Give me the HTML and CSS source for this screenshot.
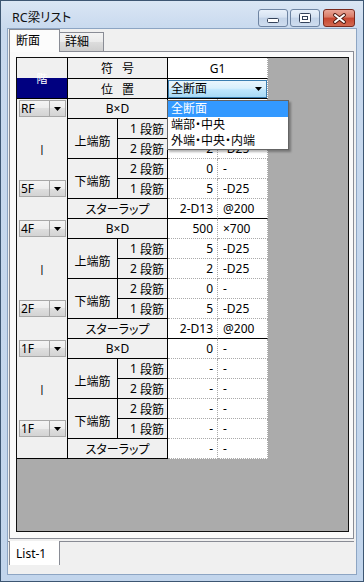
FILE: index.html
```html
<!DOCTYPE html>
<html lang="ja">
<head>
<meta charset="utf-8">
<title>RC梁リスト</title>
<link rel="stylesheet" href="styles.css">
</head>
<body>
<div class="window">
  <div class="titlebar">
    <span class="title">RC梁リスト</span>
    <div class="caps">
      <div class="cbtn min"><svg width="12" height="5" viewBox="0 0 12 5"><rect x="0.5" y="0.5" width="11" height="4" rx="1" fill="#fff" stroke="#34425a"/></svg></div>
      <div class="cbtn max"><svg width="12" height="10" viewBox="0 0 12 10"><rect x="0.5" y="0.5" width="11" height="9" rx="1" fill="#fff" stroke="#34425a"/><rect x="3.5" y="3.5" width="5" height="3" fill="none" stroke="#34425a"/></svg></div>
      <div class="cbtn close"><svg width="15" height="11" viewBox="0 0 15 11"><path d="M3 2 L12 9 M12 2 L3 9" stroke="#4a1a12" stroke-width="3.8" stroke-linecap="round"/><path d="M3 2 L12 9 M12 2 L3 9" stroke="#fff" stroke-width="2" stroke-linecap="round"/></svg></div>
    </div>
  </div>
  <div class="client">
    <div class="tabs">
      <div class="tab active">断面</div>
      <div class="tab">詳細</div>
    </div>
    <div class="tabpanel">
      <div class="gv">
        <div class="grid">
          <div class="c kai">階</div>
          <div class="c s2 sp">符 号</div>
          <div class="c v s2 hb">G1</div>
          <div class="c s2 sp">位 置</div>
          <div class="c v s2 hb hc"><div class="hcmb"><span class="t">全断面</span><span class="b"><svg width="7" height="4" viewBox="0 0 7 4"><path d="M0 0H7L3.5 4Z" fill="#000"/></svg></span></div></div>

          <div class="c fl">
            <div class="cr"><div class="cmb"><span class="t">RF</span><span class="b"><svg width="7" height="4" viewBox="0 0 7 4"><path d="M0 0H7L3.5 4Z" fill="#000"/></svg></span></div></div>
            <div class="bar">|</div>
            <div class="cr"><div class="cmb"><span class="t">5F</span><span class="b"><svg width="7" height="4" viewBox="0 0 7 4"><path d="M0 0H7L3.5 4Z" fill="#000"/></svg></span></div></div>
          </div>
          <div class="c s2">B×D</div><div class="c v n"></div><div class="c v u"></div>
          <div class="c r2 lab">上端筋</div><div class="c dan"><span class="d">1</span>段筋</div><div class="c v n"></div><div class="c v u"></div>
          <div class="c dan"><span class="d">2</span>段筋</div><div class="c v n">2</div><div class="c v u">-D25</div>
          <div class="c r2 lab">下端筋</div><div class="c dan"><span class="d">2</span>段筋</div><div class="c v n">0</div><div class="c v u">-</div>
          <div class="c dan"><span class="d">1</span>段筋</div><div class="c v n">5</div><div class="c v u">-D25</div>
          <div class="c s2">スターラップ</div><div class="c v n end">2-D13</div><div class="c v u end">@200</div>

          <div class="c fl">
            <div class="cr"><div class="cmb"><span class="t">4F</span><span class="b"><svg width="7" height="4" viewBox="0 0 7 4"><path d="M0 0H7L3.5 4Z" fill="#000"/></svg></span></div></div>
            <div class="bar">|</div>
            <div class="cr"><div class="cmb"><span class="t">2F</span><span class="b"><svg width="7" height="4" viewBox="0 0 7 4"><path d="M0 0H7L3.5 4Z" fill="#000"/></svg></span></div></div>
          </div>
          <div class="c s2">B×D</div><div class="c v n">500</div><div class="c v u">×700</div>
          <div class="c r2 lab">上端筋</div><div class="c dan"><span class="d">1</span>段筋</div><div class="c v n">5</div><div class="c v u">-D25</div>
          <div class="c dan"><span class="d">2</span>段筋</div><div class="c v n">2</div><div class="c v u">-D25</div>
          <div class="c r2 lab">下端筋</div><div class="c dan"><span class="d">2</span>段筋</div><div class="c v n">0</div><div class="c v u">-</div>
          <div class="c dan"><span class="d">1</span>段筋</div><div class="c v n">5</div><div class="c v u">-D25</div>
          <div class="c s2">スターラップ</div><div class="c v n end">2-D13</div><div class="c v u end">@200</div>

          <div class="c fl last">
            <div class="cr"><div class="cmb"><span class="t">1F</span><span class="b"><svg width="7" height="4" viewBox="0 0 7 4"><path d="M0 0H7L3.5 4Z" fill="#000"/></svg></span></div></div>
            <div class="bar">|</div>
            <div class="cr"><div class="cmb"><span class="t">1F</span><span class="b"><svg width="7" height="4" viewBox="0 0 7 4"><path d="M0 0H7L3.5 4Z" fill="#000"/></svg></span></div></div>
          </div>
          <div class="c s2">B×D</div><div class="c v n">0</div><div class="c v u">-</div>
          <div class="c r2 lab">上端筋</div><div class="c dan"><span class="d">1</span>段筋</div><div class="c v n">-</div><div class="c v u">-</div>
          <div class="c dan"><span class="d">2</span>段筋</div><div class="c v n">-</div><div class="c v u">-</div>
          <div class="c r2 lab">下端筋</div><div class="c dan"><span class="d">2</span>段筋</div><div class="c v n">-</div><div class="c v u">-</div>
          <div class="c dan"><span class="d">1</span>段筋</div><div class="c v n">-</div><div class="c v u">-</div>
          <div class="c s2">スターラップ</div><div class="c v n">-</div><div class="c v u">-</div>
        </div>
        <div class="dd">
          <div class="it sel">全断面</div>
          <div class="it">端部・中央</div>
          <div class="it">外端・中央・内端</div>
        </div>
      </div>
    </div>
    <div class="bstrip">
      <div class="btab">List-1</div>
    </div>
  </div>
</div>
</body>
</html>
```

FILE: styles.css
```css
* { box-sizing: border-box; }
html, body { margin: 0; padding: 0; }
body {
  width: 364px;
  height: 582px;
  overflow: hidden;
  font-family: "Noto Sans", "Noto Sans CJK JP", sans-serif;
  font-size: 12px;
  color: #000;
  font-feature-settings: "palt";
  background: #c4d6ec;
}
.window {
  width: 364px;
  height: 582px;
  border: 1px solid #3d5672;
  background: linear-gradient(#dae6f4 0, #c8d9ee 28px, #c2d5ec 100%);
  display: flex;
  flex-direction: column;
  padding: 0 7px 7px 7px;
}
.titlebar {
  height: 28px;
  flex: none;
  display: flex;
  align-items: flex-start;
}
.title {
  margin: 10px 0 0 4px;
  line-height: 14px;
  font-size: 12.5px;
  color: #101010;
}
.caps {
  margin-left: auto;
  margin-top: 8px;
  margin-right: 1px;
  display: flex;
}
.cbtn {
  height: 18px;
  border-radius: 3px;
  display: flex;
  align-items: center;
  justify-content: center;
}
.min, .max {
  width: 30px;
  border: 1px solid #6e84a2;
  background: linear-gradient(#e8f0fa 0, #d6e2f1 45%, #c3d3e8 50%, #cfddef 100%);
}
.min { margin-right: 2px; }
.min svg { margin-top: 4px; }
.close {
  width: 32px;
  margin-left: 3px;
  border: 1px solid #7a2a1e;
  background: linear-gradient(#e9a597 0, #d97a66 45%, #c7452f 50%, #d36a52 100%);
}
.client {
  flex: 1;
  background: #f0f0f0;
  box-shadow: 0 0 0 1px #8da5c3;
  display: flex;
  flex-direction: column;
}
.tabs {
  height: 22px;
  flex: none;
  display: flex;
  align-items: flex-start;
  padding-left: 1px;
  position: relative;
  z-index: 1;
}
.tab {
  height: 19px;
  width: 44px;
  margin-top: 3px;
  border: 1px solid #898c95;
  border-left: none;
  border-bottom: none;
  padding-left: 5px;
  line-height: 18px;
  background: linear-gradient(#f3f3f3 0, #ebebeb 50%, #dddddd 50%, #cfcfcf 100%);
}
.tab.active {
  width: 51px;
  height: 23px;
  margin-top: 0;
  border-left: 1px solid #898c95;
  padding-left: 6px;
  line-height: 21px;
  background: #fcfcfc;
}
.tabpanel {
  height: 488px;
  flex: none;
  margin: 0 2px 0 1px;
  border: 1px solid #898c95;
  background: #fafafa;
  padding: 5px 4px 6px 6px;
}
.gv {
  height: 475px;
  border: 1px solid #101010;
  background: #ababab;
  position: relative;
}
.grid {
  display: grid;
  grid-template-columns: 51px 50px 50px 50px 50px;
  grid-template-rows: 21px repeat(19, 20px);
  width: 251px;
}
.c {
  display: flex;
  align-items: center;
  justify-content: center;
  white-space: nowrap;
  overflow: hidden;
  background: #f0f0f0;
  border-right: 1px solid #000;
  border-bottom: 1px solid #000;
}
.v {
  background: #fff;
  border-right: 1px dotted #aaaaaa;
  border-bottom: 1px dotted #aaaaaa;
}
.hb, .end { border-bottom: 1px solid #000; }
.s2 { grid-column: span 2; }
.r2 { grid-row: span 2; }
.sp { word-spacing: 6px; }
.n { justify-content: flex-end; padding-right: 4px; }
.u { justify-content: flex-start; padding-left: 5px; }
.dan { justify-content: flex-end; padding-right: 3px; }
.dan .d { margin-right: 3px; }
.lab { padding-top: 4px; }
.kai {
  grid-row: span 2;
  align-items: flex-start;
  padding-top: 14px;
  line-height: 14px;
  font-size: 11px;
  color: #fff;
  background: linear-gradient(#f0f0f0 0, #f0f0f0 20px, #000080 20px, #000080 100%);
}
.hc { align-items: flex-start; }
.hcmb {
  width: 100%;
  height: 18px;
  margin-top: 1px;
  display: flex;
  border: 1px solid #3c7fb1;
  background: linear-gradient(#eaf6fd 0, #d9f0fc 45%, #bee6fd 55%, #a7d9f5 100%);
}
.hcmb .t { flex: 1; padding-left: 2px; line-height: 16px; }
.hcmb .b { width: 16px; display: flex; align-items: center; justify-content: center; }
.fl {
  grid-row: span 6;
  border-bottom: none;
  flex-direction: column;
  align-items: stretch;
  justify-content: flex-start;
}
.fl.last { border-bottom: 1px solid #000; }
.cr { height: 20px; padding: 1px 0 0 2px; }
.bar {
  height: 60px;
  display: flex;
  align-items: center;
  justify-content: center;
  font-size: 11px;
  font-family: "Liberation Sans", sans-serif;
}
.cmb {
  width: 47px;
  height: 17px;
  display: flex;
  border: 1px solid #a7a7a7;
  background: linear-gradient(#f4f4f4 0, #ececec 50%, #dfdfdf 50%, #d3d3d3 100%);
}
.cmb .t { flex: 1; padding-left: 1px; line-height: 15px; }
.cmb .b {
  width: 16px;
  border-left: 1px solid #a7a7a7;
  display: flex;
  align-items: center;
  justify-content: center;
}
.dd {
  position: absolute;
  left: 150px;
  top: 42px;
  width: 122px;
  border: 1px solid #646464;
  background: #fff;
  box-shadow: 2px 2px 2px rgba(0, 0, 0, 0.3);
}
.it {
  height: 16px;
  line-height: 16px;
  padding-left: 3px;
  white-space: nowrap;
}
.it.sel { background: #3399ff; color: #fff; }
.bstrip {
  margin: 2px 2px 0 0;
  border-top: 1px solid #898c95;
  flex: none;
}
.btab {
  width: 51px;
  height: 24px;
  margin: -1px 0 0 1px;
  background: #fff;
  border: 1px solid #898c95;
  border-top: none;
  border-bottom: none;
  padding: 6px 0 0 6px;
  line-height: 14px;
}
```
